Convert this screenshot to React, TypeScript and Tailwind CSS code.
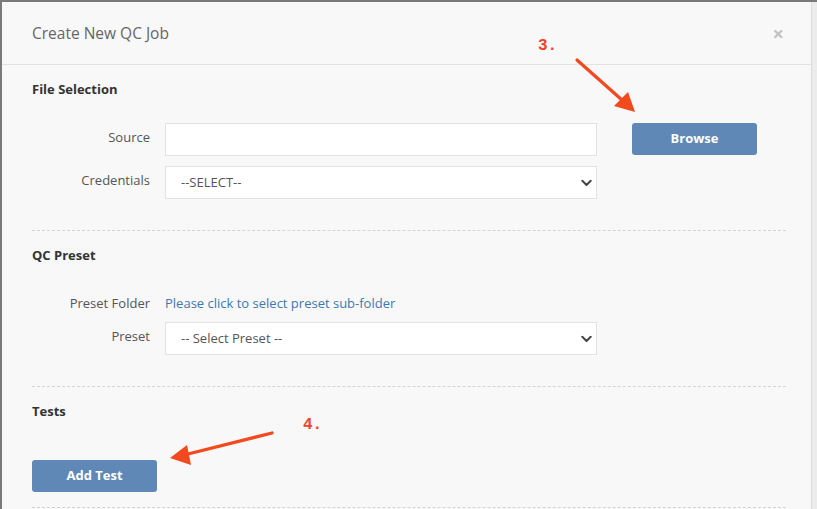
import { useState } from 'react'

const font = { fontFamily: '"Open Sans", "Liberation Sans", sans-serif' }

function Chevron() {
    return (
        <svg width="11" height="7" viewBox="0 0 11 7" className="pointer-events-none absolute right-[5px] top-1/2 -translate-y-1/2">
            <path d="M1.3 1.3 L5.5 5.5 L9.7 1.3" fill="none" stroke="#444" strokeWidth="2" strokeLinecap="round" strokeLinejoin="round" />
        </svg>
    )
}

function Row({ label, children }: { label: string; children: React.ReactNode }) {
    return (
        <div className="flex items-start">
            <div className="w-[118px] shrink-0 pt-[5px] text-right text-[13px] leading-[18px] text-[#555]">{label}</div>
            <div className="ml-[15px]">{children}</div>
        </div>
    )
}

function Select({ value, options }: { value: string; options: string[] }) {
    const [v, setV] = useState(value)
    return (
        <div className="relative w-[432px]">
            <select
                value={v}
                onChange={(e) => setV(e.target.value)}
                className="h-[33px] w-full appearance-none border border-[#e3e3e3] bg-white pl-[15px] text-[13px] text-[#555] outline-none"
                style={font}
            >
                {options.map((o) => (
                    <option key={o}>{o}</option>
                ))}
            </select>
            <Chevron />
        </div>
    )
}

export default function App() {
    const [source, setSource] = useState('')

    return (
        <div className="relative h-[509px] w-[817px] overflow-hidden border-l-2 border-t-2 border-[#7a7a7a] bg-[#ececec]" style={font}>
            <div className="h-full w-[810px] border-r border-[#dcdcdc] bg-[#f8f8f8]">
                {/* header */}
                <div className="flex h-[63px] items-center justify-between border-b border-[#e2e2e2] pl-[30px] pr-[27px] pt-[1px]">
                    <h2 className="text-[15.5px] font-normal text-[#666]">Create New QC Job</h2>
                    <button className="text-[20px] font-bold leading-none text-[#c2c2c2]">×</button>
                </div>

                <div className="pl-[30px] pr-[25px]">
                    {/* File Selection */}
                    <div className="border-b border-dashed border-[#d4d4d4] pb-[31px] pt-[15px]">
                        <h3 className="text-[13px] font-bold leading-[18px] text-[#333]">File Selection</h3>
                        <div className="mt-[25px] flex flex-col gap-[10px]">
                            <div className="flex items-start">
                                <Row label="Source">
                                    <input
                                        value={source}
                                        onChange={(e) => setSource(e.target.value)}
                                        className="h-[33px] w-[432px] border border-[#e3e3e3] bg-white px-3 text-[13px] outline-none"
                                    />
                                </Row>
                                <button className="ml-[35px] h-[32px] w-[125px] rounded-[3px] bg-[#5f88b6] text-[13px] font-bold text-white">
                                    Browse
                                </button>
                            </div>
                            <Row label="Credentials">
                                <Select value="--SELECT--" options={['--SELECT--']} />
                            </Row>
                        </div>
                    </div>

                    {/* QC Preset */}
                    <div className="border-b border-dashed border-[#d4d4d4] pb-[31px] pt-[15px]">
                        <h3 className="text-[13px] font-bold leading-[18px] text-[#333]">QC Preset</h3>
                        <div className="mt-[30px] flex flex-col gap-[10px]">
                            <div className="flex items-start">
                                <div className="w-[118px] shrink-0 text-right text-[13px] leading-[18px] text-[#555]">Preset Folder</div>
                                <a className="ml-[15px] cursor-pointer text-[13px] leading-[18px] text-[#3b78b3]">
                                    Please click to select preset sub-folder
                                </a>
                            </div>
                            <Row label="Preset">
                                <Select value="-- Select Preset --" options={['-- Select Preset --']} />
                            </Row>
                        </div>
                    </div>

                    {/* Tests */}
                    <div className="border-b border-dashed border-[#d4d4d4] pb-[15px] pt-[15px]">
                        <h3 className="text-[13px] font-bold leading-[18px] text-[#333]">Tests</h3>
                        <button className="mt-[40px] h-[32px] w-[125px] rounded-[3px] bg-[#5f88b6] text-[13px] font-bold text-white">
                            Add Test
                        </button>
                    </div>
                </div>
            </div>

            {/* annotations */}
            <span className="absolute left-[536px] top-[32px] text-[16px] font-bold text-[#e9462c]" style={{ fontFamily: '"Liberation Mono", monospace' }}>
                3.
            </span>
            <span className="absolute left-[301px] top-[411px] text-[16px] font-bold text-[#e9462c]" style={{ fontFamily: '"Liberation Mono", monospace' }}>
                4.
            </span>
            <svg className="pointer-events-none absolute left-0 top-0" width="817" height="509">
                <line x1="575" y1="58" x2="620" y2="98" stroke="#f2491f" strokeWidth="3.2" strokeLinecap="round" />
                <polygon points="633,110 612,104 626,90" fill="#f2491f" />
                <line x1="270" y1="431" x2="186" y2="452" stroke="#f2491f" strokeWidth="3.2" strokeLinecap="round" />
                <polygon points="168,456 185,443 189,463" fill="#f2491f" />
            </svg>
        </div>
    )
}
